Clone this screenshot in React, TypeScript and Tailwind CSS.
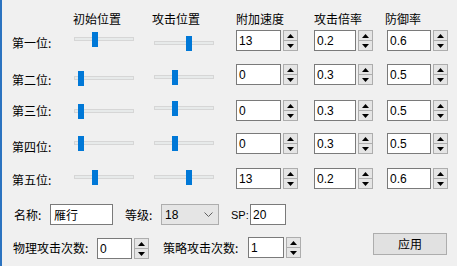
import React from 'react'

const cjk = { fontFamily: '"Noto Sans CJK SC", "Liberation Sans", sans-serif' }

const rows = [
  { label: '第一位', speed: '13', atk: '0.2', def: '0.6', s1: 18, s2: 32, lt: 'mt-[7px]', t1: 'mt-[2px]', t2: 'mt-[6px]', top: 'mt-[5px]' },
  { label: '第二位', speed: '0', atk: '0.3', def: '0.5', s1: 4, s2: 18, lt: 'mt-[10px]', t1: 'mt-[7px]', t2: 'mt-[6px]', top: 'mt-[13px]' },
  { label: '第三位', speed: '0', atk: '0.3', def: '0.5', s1: 4, s2: 18, lt: 'mt-[5px]', t1: 'mt-[4px]', t2: 'mt-[1px]', top: 'mt-[15px]' },
  { label: '第四位', speed: '0', atk: '0.3', def: '0.5', s1: 4, s2: 18, lt: 'mt-[8px]', t1: 'mt-[3px]', t2: 'mt-[3px]', top: 'mt-[12px]' },
  { label: '第五位', speed: '13', atk: '0.2', def: '0.6', s1: 18, s2: 32, lt: 'mt-[6px]', t1: 'mt-[2px]', t2: 'mt-[2px]', top: 'mt-[14px]' },
]

function Slider({ pos, className }: { pos: number; className: string }) {
  return (
    <div className={`relative h-[15px] w-[60px] shrink-0 ${className}`}>
      <div className="absolute left-0 right-0 top-[5px] h-[4px] border border-[#d6d6d6] bg-[#e7eaea]" />
      <div className="absolute top-0 h-[15px] w-[6px] bg-[#0078d7]" style={{ left: pos }} />
    </div>
  )
}

function Arrow({ up }: { up?: boolean }) {
  return (
    <svg width="7" height="4" viewBox="0 0 7 4">
      {up ? <path d="M0 4 L3.5 0 L7 4 Z" fill="#000" /> : <path d="M0 0 L3.5 4 L7 0 Z" fill="#000" />}
    </svg>
  )
}

function Spin({ value, w }: { value: string; w: string }) {
  return (
    <div className="flex h-[21px] shrink-0">
      <div className={`flex h-[21px] ${w} items-center border border-[#7a7a7a] bg-white pl-[2px] text-[12px] leading-none text-black`}>
        {value}
      </div>
      <div className="ml-[2px] flex w-[15px] flex-col">
        <div className="flex h-[11px] items-center justify-center border border-[#adadad] bg-[#e5e5e5]">
          <Arrow up />
        </div>
        <div className="-mt-px flex h-[11px] items-center justify-center border border-[#adadad] bg-[#e5e5e5]">
          <Arrow />
        </div>
      </div>
    </div>
  )
}

export default function App() {
  return (
    <div
      className="h-[266px] w-[457px] overflow-hidden border-l-2 border-[#2b73c0] bg-[#f0f0f0] text-black"
      style={{ fontFamily: '"Liberation Sans", "Noto Sans CJK SC", sans-serif' }}
    >
      <div className="mt-[13px] flex h-[12px] pl-[71px] text-[12px] leading-[12px]" style={cjk}>
        <span className="w-[79px] shrink-0">初始位置</span>
        <span className="w-[84px] shrink-0">攻击位置</span>
        <span className="w-[78px] shrink-0">附加速度</span>
        <span className="w-[71px] shrink-0">攻击倍率</span>
        <span className="shrink-0">防御率</span>
      </div>

      {rows.map((r) => (
        <div key={r.label} className={`flex h-[21px] items-start pl-[10px] ${r.top}`}>
          <span className={`w-[62px] shrink-0 text-[12px] leading-[12px] ${r.lt}`} style={cjk}>
            {r.label}:
          </span>
          <Slider pos={r.s1} className={r.t1} />
          <Slider pos={r.s2} className={`ml-[20px] ${r.t2}`} />
          <div className="ml-[22px]">
            <Spin value={r.speed} w="w-[45px]" />
          </div>
          <div className="ml-[16px]">
            <Spin value={r.atk} w="w-[42px]" />
          </div>
          <div className="ml-[14px]">
            <Spin value={r.def} w="w-[44px]" />
          </div>
        </div>
      ))}

      <div className="mt-[15px] flex h-[21px] items-center pl-[12px] text-[12px]">
        <span className="w-[36px] shrink-0 leading-[12px]" style={cjk}>名称:</span>
        <div className="flex h-[21px] w-[63px] shrink-0 items-center border border-[#7a7a7a] bg-white pl-[3px] leading-none" style={cjk}>
          雁行
        </div>
        <span className="ml-[12px] w-[36px] shrink-0 leading-[12px]" style={cjk}>等级:</span>
        <div className="flex h-[21px] w-[58px] shrink-0 items-center justify-between border border-[#adadad] bg-[#e5e5e5] pl-[3px] pr-[5px] leading-none">
          <span>18</span>
          <svg width="9" height="5" viewBox="0 0 9 5">
            <path d="M0.5 0.5 L4.5 4.5 L8.5 0.5" fill="none" stroke="#606060" strokeWidth="1" />
          </svg>
        </div>
        <span className="ml-[12px] w-[19px] shrink-0 text-[11px] leading-[12px]">SP:</span>
        <div className="flex h-[21px] w-[36px] shrink-0 items-center border border-[#7a7a7a] bg-white pl-[2px] leading-none">
          20
        </div>
      </div>

      <div className="mt-[8px] flex h-[26px] items-start pl-[11px] text-[12px]">
        <span className="mt-[9px] w-[84px] shrink-0 leading-[12px]" style={cjk}>物理攻击次数:</span>
        <div className="mt-[5px]">
          <Spin value="0" w="w-[35px]" />
        </div>
        <span className="ml-[14px] mt-[9px] w-[85px] shrink-0 leading-[12px]" style={cjk}>策略攻击次数:</span>
        <div className="mt-[4px]">
          <Spin value="1" w="w-[36px]" />
        </div>
        <button
          className="ml-[72px] flex h-[22px] w-[74px] shrink-0 items-center justify-center border border-[#adadad] bg-[#e1e1e1] text-[12px] leading-none"
          style={cjk}
        >
          应用
        </button>
      </div>
    </div>
  )
}
